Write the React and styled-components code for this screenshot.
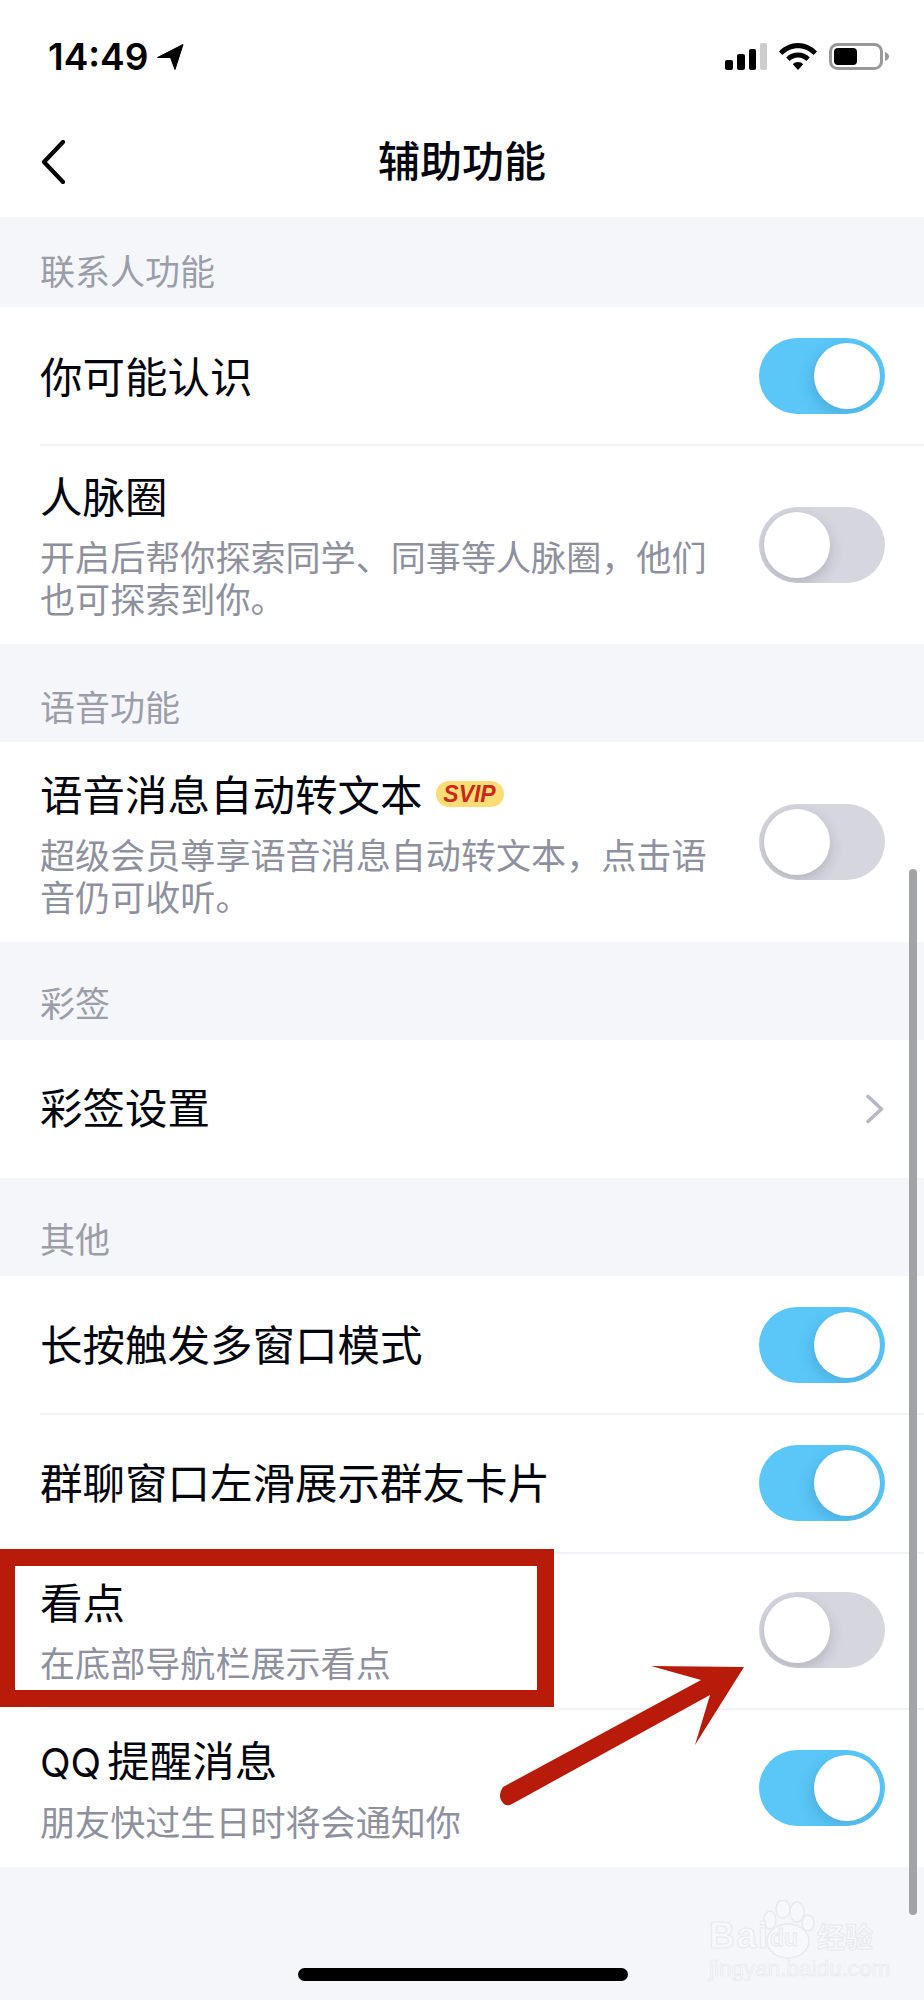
import React from "react";
import styled, { createGlobalStyle } from "styled-components";

const Global = createGlobalStyle`
  html, body { margin: 0; padding: 0; background: #f5f6fa; }
  * { box-sizing: border-box; }
`;

const CJK = `Inter, "Noto Sans CJK SC", "Noto Sans", sans-serif`;

const Screen = styled.div`
  position: relative;
  width: 924px;
  height: 2000px;
  overflow: hidden;
  background: #f5f6fa;
  font-family: ${CJK};
`;

const StatusBar = styled.div`
  height: 114px;
  background: #fff;
  display: flex;
  justify-content: space-between;
  align-items: flex-start;
  padding: 43px 35px 0 48px;
`;

const Clock = styled.div`
  display: flex;
  align-items: center;
  gap: 9px;
  height: 27px;
  font-family: Inter, sans-serif;
  font-weight: 600;
  font-size: 37px;
  line-height: 27px;
  color: #000;
`;

const StatusIcons = styled.div`
  display: flex;
  align-items: flex-start;
  gap: 12px;
`;

const NavBar = styled.div`
  height: 103px;
  background: #fff;
  display: grid;
  grid-template-columns: 1fr auto 1fr;
  align-items: center;
  padding: 0 41px 7px 41px;
`;

const NavTitle = styled.div`
  font-size: 42px;
  font-weight: 500;
  line-height: 50px;
  color: #03050f;
`;

const SectionHeader = styled.div`
  height: ${(p) => p.$h}px;
  display: flex;
  align-items: flex-end;
  padding: 0 0 ${(p) => p.$pb}px 40px;
  font-size: 35px;
  line-height: 50px;
  color: #9b9da9;
`;

const Group = styled.div`
  background: #fff;
  padding-left: 40px;
`;

const Row = styled.div`
  height: ${(p) => p.$h}px;
  display: flex;
  align-items: center;
  justify-content: space-between;
  padding-top: ${(p) => p.$top || 0}px;
  padding-right: 39px;
  box-shadow: ${(p) => (p.$divider ? "inset 0 2px 0 #f3f3f7" : "none")};
`;

const TextBlock = styled.div`
  width: 672px;
  padding-top: ${(p) => p.$pt}px;
`;

const TitleLine = styled.div`
  display: flex;
  align-items: center;
  gap: 13px;
  font-size: 42.5px;
  line-height: 50px;
  color: #04060f;
`;

const Latin = styled.span`
  font-size: 40px;
  margin-right: 6px;
`;

const Sub = styled.div`
  margin-top: 14px;
  width: 670px;
  font-size: 35.1px;
  line-height: 42px;
  color: #8e909e;
`;

const Badge = styled.span`
  display: inline-flex;
  align-items: center;
  justify-content: center;
  width: 68px;
  height: 26px;
  margin-top: -3px;
  border-radius: 13px;
  background: #fbdc75;
  color: #c9281c;
  font-family: "Liberation Sans", sans-serif;
  font-style: italic;
  font-weight: 700;
  font-size: 23px;
  line-height: 26px;
`;

const Track = styled.div`
  position: relative;
  flex: none;
  width: 126px;
  height: 76px;
  border-radius: 38px;
  overflow: hidden;
  background: ${(p) => (p.$on ? "#5ac7f8" : "#d5d6de")};
`;

const Knob = styled.div`
  position: absolute;
  top: 5px;
  left: ${(p) => (p.$on ? 55 : 5)}px;
  width: 66px;
  height: 66px;
  border-radius: 50%;
  background: #fff;
  box-shadow: ${(p) => (p.$on ? "-3px 5px 14px rgba(30,90,130,.22)" : "0 5px 14px rgba(40,40,60,.2)")};
`;

const Toggle = ({ on }) => (
  <Track $on={on}>
    <Knob $on={on} />
  </Track>
);

const Highlight = styled.div`
  position: absolute;
  left: 0;
  top: 1549px;
  width: 554px;
  height: 158px;
  border-style: solid;
  border-color: #b91b0a;
  border-width: 17px 17px 17px 15px;
`;

const ArrowSvg = styled.svg`
  position: absolute;
  left: 490px;
  top: 1655px;
`;

const Scrollbar = styled.div`
  position: absolute;
  left: 909px;
  top: 869px;
  width: 8px;
  height: 1046px;
  border-radius: 4px;
  background: #a2a3a7;
`;

const HomeBar = styled.div`
  position: absolute;
  left: 298px;
  top: 1968px;
  width: 330px;
  height: 13px;
  border-radius: 7px;
  background: #000;
`;

const Watermark = styled.div`
  position: absolute;
  left: 709px;
  top: 1900px;
  width: 170px;
  height: 80px;
  color: #f7f8fb;
  -webkit-text-stroke: 1px #e8e9ed;
  font-family: "Liberation Sans", sans-serif;
`;

const PawSvg = styled.svg`
  position: absolute;
  left: 0;
  top: 0;
`;

const MarkRow = styled.div`
  position: relative;
  display: flex;
  align-items: flex-end;
  height: 54px;
  font-weight: 700;
`;

const MarkBai = styled.span`
  width: 61px;
  font-size: 36px;
  line-height: 36px;
  letter-spacing: 1.5px;
`;

const MarkDu = styled.span`
  width: 47px;
  font-size: 23px;
  line-height: 32px;
`;

const MarkJy = styled.span`
  font-family: "Noto Sans CJK SC", sans-serif;
  font-size: 28px;
  line-height: 36px;
`;

const MarkUrl = styled.div`
  margin-top: 3px;
  font-size: 22.5px;
  line-height: 24px;
  white-space: nowrap;
  -webkit-text-stroke: 0.7px #e8e9ed;
`;

const Item = ({ title, sub, badge, on, h, divider, pt = 5, top }) => (
  <Row $h={h} $divider={divider} $top={top}>
    <TextBlock $pt={pt}>
      <TitleLine>
        <span>{title}</span>
        {badge && <Badge>SVIP</Badge>}
      </TitleLine>
      {sub && <Sub>{sub}</Sub>}
    </TextBlock>
    {on !== undefined ? (
      <Toggle on={on} />
    ) : (
      <svg width="20" height="30" viewBox="0 0 20 30" fill="none">
        <path d="M3 2.5 L16.5 15 L3 27.5" stroke="#b5b7c4" strokeWidth="3.6" strokeLinecap="round" strokeLinejoin="round" />
      </svg>
    )}
  </Row>
);

export default function App() {
  return (
    <Screen>
      <Global />
      <StatusBar>
        <Clock>
          14:49
          <svg width="27" height="26" viewBox="0 0 27 26">
            <path d="M26 0.5 L0.5 13.5 L13.5 13.5 L18 25.5 Z" fill="#000" strokeLinejoin="round" stroke="#000" strokeWidth="1" />
          </svg>
        </Clock>
        <StatusIcons>
          <svg width="43" height="27" viewBox="0 0 43 27">
            <rect x="1" y="17" width="8" height="10" rx="2" fill="#000" />
            <rect x="13" y="11" width="8" height="16" rx="2" fill="#000" />
            <rect x="25" y="6" width="7" height="21" rx="2" fill="#000" />
            <rect x="36" y="0" width="7" height="27" rx="2" fill="#cdcdcd" />
          </svg>
          <svg width="38" height="27" viewBox="0 0 38 27">
            <path d="M19 0 C26 0 33 3 38 8.5 L34.6 12 C30.5 7.6 25 5.2 19 5.2 C13 5.2 7.5 7.6 3.4 12 L0 8.5 C5 3 12 0 19 0 Z" fill="#000" />
            <path d="M19 9.6 C23.6 9.6 27.7 11.4 30.8 14.6 L27.4 18 C25.1 15.8 22.2 14.6 19 14.6 C15.8 14.6 12.9 15.8 10.6 18 L7.2 14.6 C10.3 11.4 14.4 9.6 19 9.6 Z" fill="#000" />
            <path d="M19 19 C21 19 22.8 19.8 24.2 21.2 L19 27 L13.8 21.2 C15.2 19.8 17 19 19 19 Z" fill="#000" />
          </svg>
          <svg width="60" height="27" viewBox="0 0 60 27">
            <rect x="1.5" y="1.5" width="51" height="24" rx="7" fill="none" stroke="#999" strokeWidth="3" />
            <rect x="5" y="5" width="23" height="17" rx="4" fill="#000" />
            <path d="M56 9 C58.5 10 60 11.5 60 13.5 C60 15.5 58.5 17 56 18 Z" fill="#999" />
          </svg>
        </StatusIcons>
      </StatusBar>
      <NavBar>
        <svg width="24" height="44" viewBox="0 0 24 44" fill="none">
          <path d="M22 2 L3 22 L22 42" stroke="#000" strokeWidth="4.2" strokeLinecap="round" strokeLinejoin="round" />
        </svg>
        <NavTitle>辅助功能</NavTitle>
        <span />
      </NavBar>

      <SectionHeader $h={90} $pb={10}>联系人功能</SectionHeader>
      <Group>
        <Item h={137} title="你可能认识" on />
        <Item h={200} divider top={2} pt={3} title="人脉圈" sub={"开启后帮你探索同学、同事等人脉圈\uFF0C他们也可探索到你。"} on={false} />
      </Group>

      <SectionHeader $h={98} $pb={9}>语音功能</SectionHeader>
      <Group>
        <Item h={200} title="语音消息自动转文本" badge sub={"超级会员尊享语音消息自动转文本\uFF0C点击语音仍可收听。"} on={false} />
      </Group>

      <SectionHeader $h={98} $pb={11}>彩签</SectionHeader>
      <Group>
        <Item h={138} pt={0} title="彩签设置" />
      </Group>

      <SectionHeader $h={98} $pb={11}>其他</SectionHeader>
      <Group>
        <Item h={137} pt={3} title="长按触发多窗口模式" on />
        <Item h={139} pt={3} divider title="群聊窗口左滑展示群友卡片" on />
        <Item h={156} pt={4} divider title="看点" sub="在底部导航栏展示看点" on={false} />
        <Item h={159} divider title={<><Latin>QQ</Latin>提醒消息</>} sub="朋友快过生日时将会通知你" on />
      </Group>

      <Highlight />
      <ArrowSvg width="264" height="160" viewBox="490 1655 264 160">
        <path
          d="M744 1667 L651 1666 L701 1680 L503 1787 Q498 1794 501 1800 Q505 1808 512 1804 L710 1695 L695 1745 Z"
          fill="#b91b0a"
        />
      </ArrowSvg>
      <Scrollbar />
      <HomeBar />
      <Watermark>
        <PawSvg width="170" height="80" viewBox="709 1900 170 80" fill="#f7f8fb" stroke="#e8e9ed" strokeWidth="1.5">
          <ellipse cx="783" cy="1909" rx="7" ry="9" />
          <ellipse cx="797" cy="1912" rx="7" ry="10" />
          <ellipse cx="770" cy="1920" rx="6" ry="9" />
          <ellipse cx="808" cy="1923" rx="6" ry="8" />
          <ellipse cx="788" cy="1941" rx="21" ry="17" />
        </PawSvg>
        <MarkRow>
          <MarkBai>Bai</MarkBai>
          <MarkDu>du</MarkDu>
          <MarkJy>经验</MarkJy>
        </MarkRow>
        <MarkUrl>jingyan.baidu.com</MarkUrl>
      </Watermark>
    </Screen>
  );
}
